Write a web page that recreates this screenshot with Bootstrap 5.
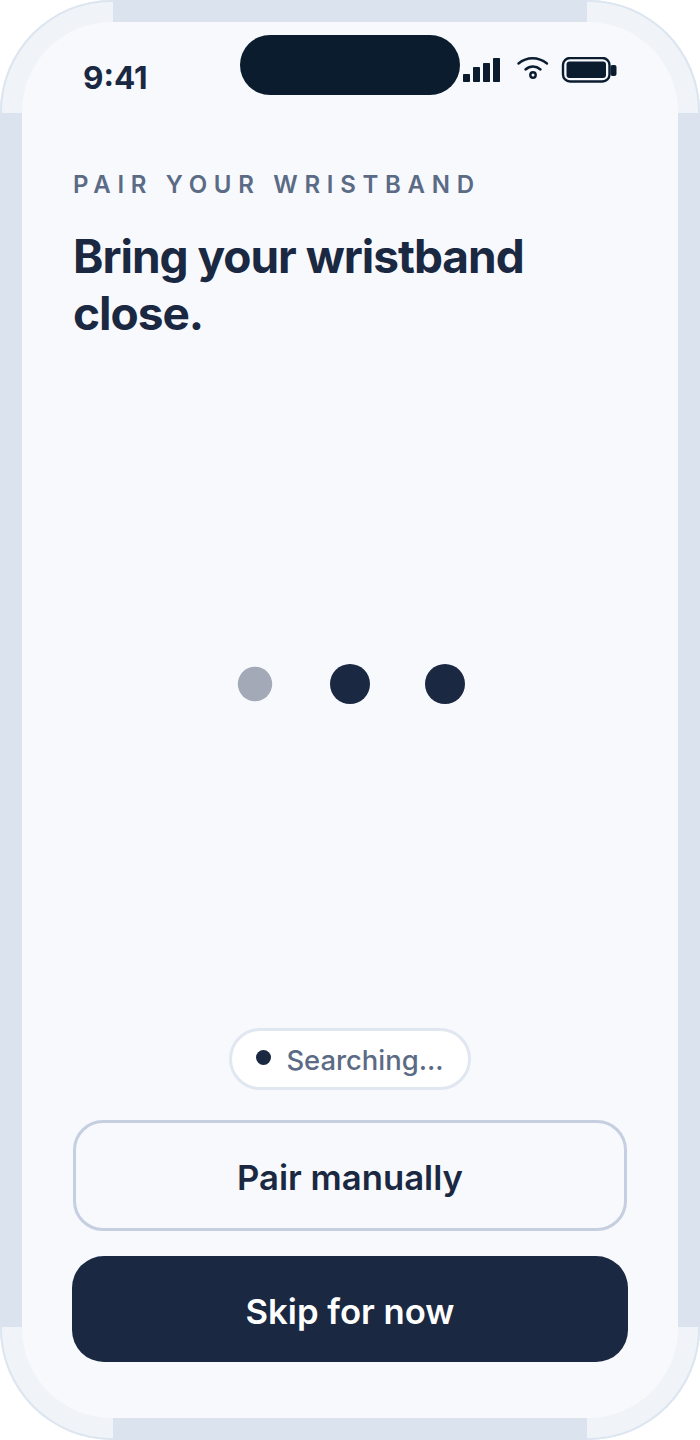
<!DOCTYPE html>
<html lang="en">
  <head>
    <meta charset="UTF-8" />
    <meta name="viewport" content="width=device-width, initial-scale=1.0" />
    <title>Pair your wristband</title>
    <link href="https://cdn.jsdelivr.net/npm/bootstrap@5.3.3/dist/css/bootstrap.min.css" rel="stylesheet" />
    <style>
      body { background: #fff; font-family: "Inter", "Liberation Sans", sans-serif; color: #1a2842; }
      .phone { width: 700px; height: 1440px; padding: 22px; background: #dbe3ee; border-radius: 112px; }
      .bezel-corner { position: absolute; width: 113px; height: 113px; background: #f0f4f9; border: 0 solid #dde6f0; }
      .bezel-tl { top: 0; left: 0; border-width: 2px 0 0 2px; border-top-left-radius: 112px; }
      .bezel-tr { top: 0; right: 0; border-width: 2px 2px 0 0; border-top-right-radius: 112px; }
      .bezel-bl { bottom: 0; left: 0; border-width: 0 0 2px 2px; border-bottom-left-radius: 112px; }
      .bezel-br { bottom: 0; right: 0; border-width: 0 2px 2px 0; border-bottom-right-radius: 112px; }
      .screen { z-index: 1; height: 100%; background: #f7f9fd; border-radius: 90px; }
      .island { top: 13px; left: 218px; width: 220px; height: 60px; border-radius: 30px; background: #0c1c2f; }
      .status-row { height: 110px; padding: 0 61px 0 61px; }
      .clock { font-size: 31.5px; font-weight: 700; line-height: 34px; margin-top: 2px; color: #1a2842; }
      .status-icons { margin-top: -13px; }
      .eyebrow { margin: 39px 0 0 1px; font-size: 24px; line-height: 28px; font-weight: 600; letter-spacing: 6.7px; color: #5b6b85; }
      .headline { margin: 29px 0 0 1px; font-size: 46px; line-height: 57px; font-weight: 700; letter-spacing: -1.02px; color: #1a2842; }
      .pulse { gap: 55px; padding-bottom: 2px; }
      .pulse-dot { width: 40px; height: 40px; border-radius: 50%; background: #1a2842; }
      .pulse-dot.dim { transform: scale(.86); opacity: .38; }
      .search-pill { height: 62px; width: 242px; border: 3px solid #e0e7f1; border-radius: 31px; background: #fff; gap: 15px; font-size: 27.4px; font-weight: 500; color: #5b6b85; padding-top: 3px; }
      .pill-dot { width: 15px; height: 15px; border-radius: 50%; background: #1a2842; margin-top: -6px; }
      .action-btn { display: block; font-size: 34.7px; font-weight: 600; padding: 4px 0 0; }
      .action-outline { height: 111px; margin: 30px 1px 0; border: 3px solid #c5cfe0; border-radius: 30px; color: #1a2842; background: transparent; }
      .action-solid { width: 100%; height: 106px; margin-top: 25px; border: 0; border-radius: 32px; color: #fff; background: #1a2842; }
      .content { padding: 0 50px 56px 50px; }
    </style>
  </head>
  <body class="m-0">
    <div class="phone position-relative">
      <div class="bezel-corner bezel-tl"></div>
      <div class="bezel-corner bezel-tr"></div>
      <div class="bezel-corner bezel-bl"></div>
      <div class="bezel-corner bezel-br"></div>

      <div class="screen position-relative d-flex flex-column">
        <div class="island position-absolute"></div>

        <div class="status-row d-flex align-items-center justify-content-between flex-shrink-0">
          <span class="clock">9:41</span>
          <svg class="status-icons" width="155" height="28" viewBox="0 0 155 28" fill="#0c1c2f">
            <rect x="1" y="17" width="7" height="8" rx=".8" />
            <rect x="11" y="10" width="7" height="15" rx=".8" />
            <rect x="21" y="6" width="7" height="19" rx=".8" />
            <rect x="31" y="1" width="7" height="24" rx=".8" />
            <path d="M56.5 6.500 C65 -0.500 76 -0.500 85 6.500" fill="none" stroke="#0c1c2f" stroke-width="2.400" stroke-linecap="round" />
            <path d="M63.500 12.500 C68 8.500 74 8.500 78.500 12.500" fill="none" stroke="#0c1c2f" stroke-width="2.400" stroke-linecap="round" />
            <circle cx="71" cy="18" r="2.700" fill="none" stroke="#0c1c2f" stroke-width="2.400" />
            <rect x="101" y="1" width="46.500" height="23.500" rx="7" fill="none" stroke="#0c1c2f" stroke-width="2.400" />
            <rect x="104.500" y="4.500" width="39.500" height="16.500" rx="3" />
            <rect x="148.500" y="8" width="6" height="11" rx="2" />
          </svg>
        </div>

        <div class="content d-flex flex-column flex-grow-1">
          <p class="eyebrow">PAIR YOUR WRISTBAND</p>
          <h1 class="headline">Bring your wristband close.</h1>

          <div class="pulse d-flex align-items-center justify-content-center flex-grow-1">
            <span class="pulse-dot dim"></span>
            <span class="pulse-dot"></span>
            <span class="pulse-dot"></span>
          </div>

          <div class="d-flex justify-content-center">
            <div class="search-pill d-flex align-items-center justify-content-center">
              <span class="pill-dot"></span>
              <span>Searching...</span>
            </div>
          </div>
          <button class="action-btn action-outline" type="button">Pair manually</button>
          <button class="action-btn action-solid" type="button">Skip for now</button>
        </div>
      </div>
    </div>

    <script src="https://cdn.jsdelivr.net/npm/bootstrap@5.3.3/dist/js/bootstrap.bundle.min.js"></script>
  </body>
</html>
